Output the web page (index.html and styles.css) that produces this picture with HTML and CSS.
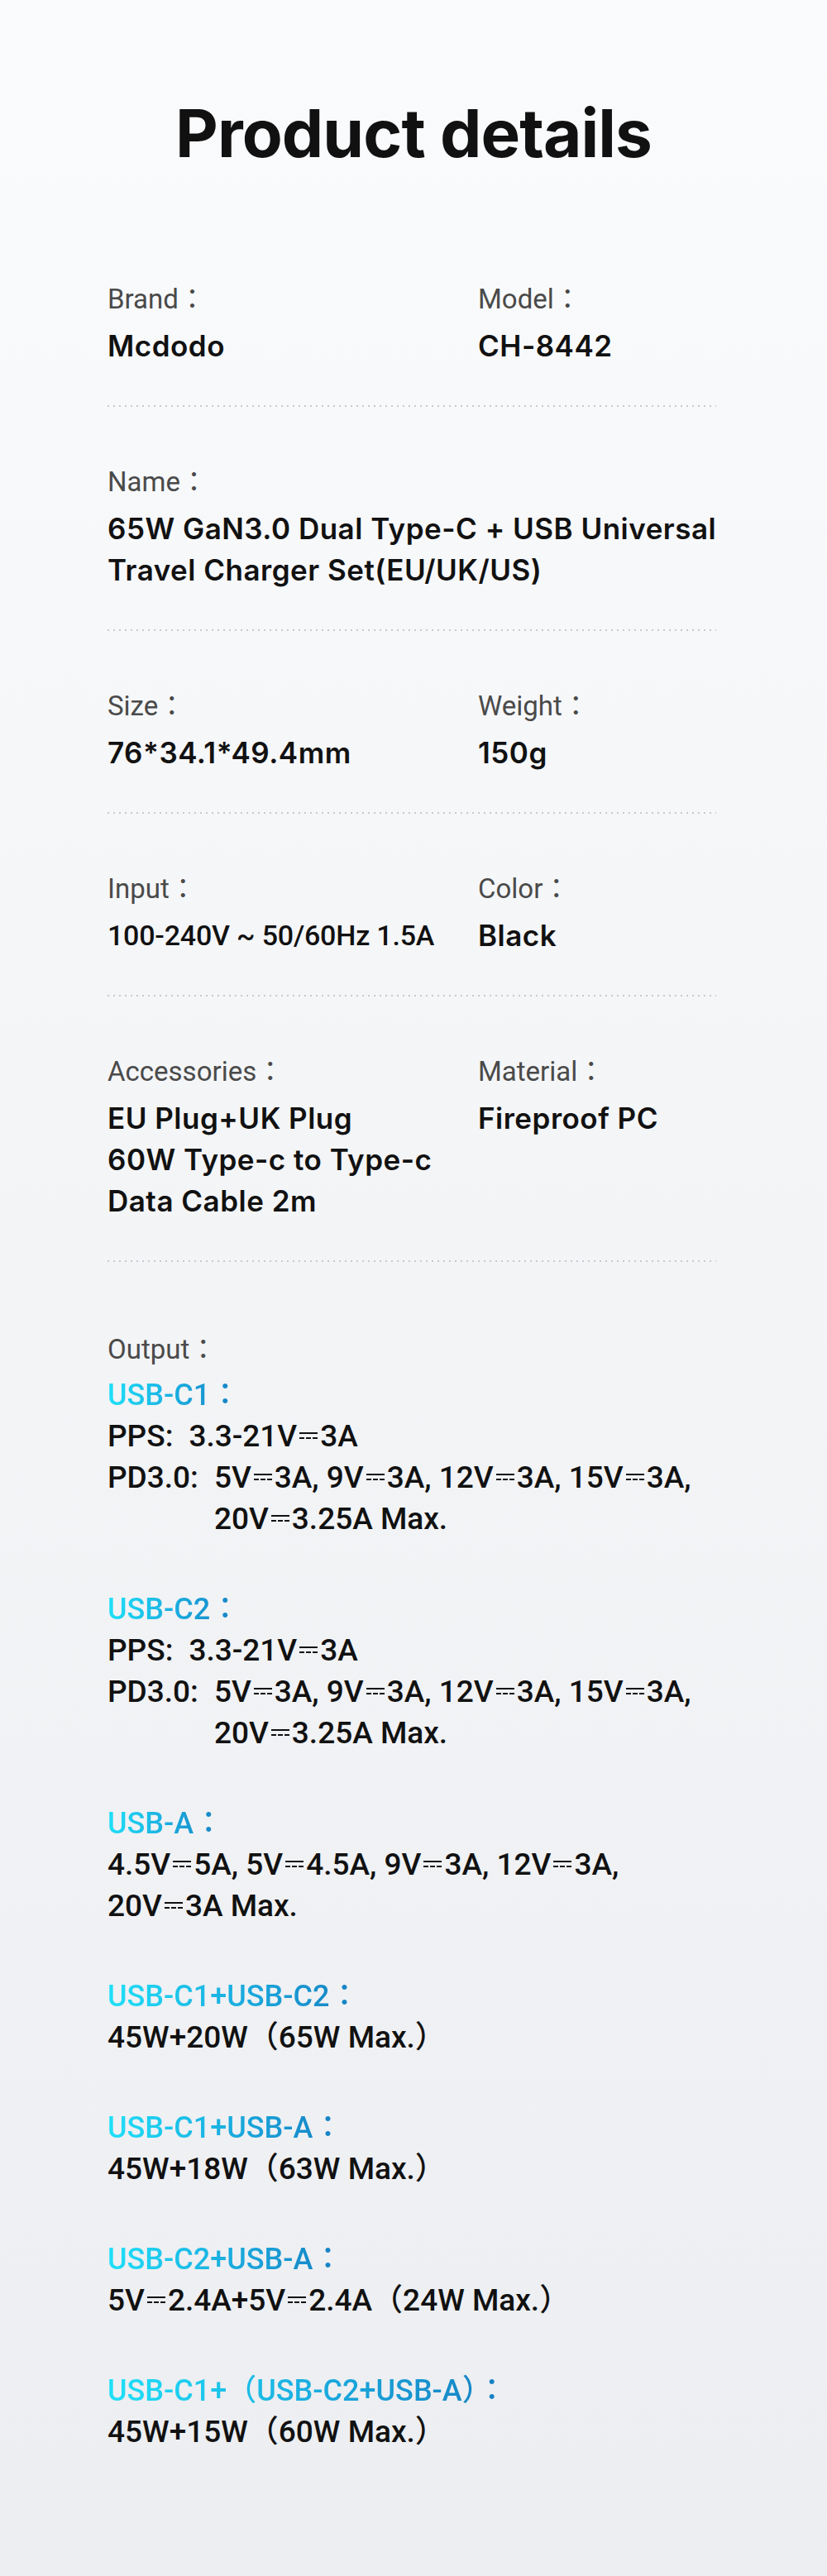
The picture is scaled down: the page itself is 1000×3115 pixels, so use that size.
FILE: index.html
```html
<!DOCTYPE html>
<html lang="en">
<head>
<meta charset="utf-8">
<title>Product details</title>
<link rel="stylesheet" href="styles.css">
</head>
<body>
<div class="page">
  <h1 class="title">Product details</h1>

  <div class="specs">
    <div class="row">
      <div class="cell">
        <div class="label">Brand<span class="colon">：</span></div>
        <div class="value">Mcdodo</div>
      </div>
      <div class="cell">
        <div class="label">Model<span class="colon">：</span></div>
        <div class="value">CH-8442</div>
      </div>
    </div>
    <div class="sep"></div>

    <div class="row">
      <div class="cell wide">
        <div class="label">Name<span class="colon">：</span></div>
        <div class="value">65W GaN3.0 Dual Type-C + USB Universal<br>Travel Charger Set(EU/UK/US)</div>
      </div>
    </div>
    <div class="sep"></div>

    <div class="row">
      <div class="cell">
        <div class="label">Size<span class="colon">：</span></div>
        <div class="value">76*34.1*49.4mm</div>
      </div>
      <div class="cell">
        <div class="label">Weight<span class="colon">：</span></div>
        <div class="value">150g</div>
      </div>
    </div>
    <div class="sep"></div>

    <div class="row">
      <div class="cell">
        <div class="label">Input<span class="colon">：</span></div>
        <div class="value cond">100-240V ~ 50/60Hz 1.5A</div>
      </div>
      <div class="cell">
        <div class="label">Color<span class="colon">：</span></div>
        <div class="value">Black</div>
      </div>
    </div>
    <div class="sep"></div>

    <div class="row">
      <div class="cell">
        <div class="label">Accessories<span class="colon">：</span></div>
        <div class="value">EU Plug+UK Plug<br>60W Type-c to Type-c<br>Data Cable 2m</div>
      </div>
      <div class="cell">
        <div class="label">Material<span class="colon">：</span></div>
        <div class="value">Fireproof PC</div>
      </div>
    </div>
    <div class="sep"></div>
  </div>

  <div class="output">
    <div class="label">Output<span class="colon">：</span></div>

    <div class="group first">
      <div class="head"><span class="grad">USB-C1<span class="colon">：</span></span></div>
      <div class="line kv"><span class="key">PPS:</span><span class="val">3.3-21V<span class="dc"></span>3A</span></div>
      <div class="line kv"><span class="key">PD3.0:</span><span class="val">5V<span class="dc"></span>3A, 9V<span class="dc"></span>3A, 12V<span class="dc"></span>3A, 15V<span class="dc"></span>3A,<br>20V<span class="dc"></span>3.25A Max.</span></div>
    </div>

    <div class="group">
      <div class="head"><span class="grad">USB-C2<span class="colon">：</span></span></div>
      <div class="line kv"><span class="key">PPS:</span><span class="val">3.3-21V<span class="dc"></span>3A</span></div>
      <div class="line kv"><span class="key">PD3.0:</span><span class="val">5V<span class="dc"></span>3A, 9V<span class="dc"></span>3A, 12V<span class="dc"></span>3A, 15V<span class="dc"></span>3A,<br>20V<span class="dc"></span>3.25A Max.</span></div>
    </div>

    <div class="group">
      <div class="head"><span class="grad">USB-A<span class="colon">：</span></span></div>
      <div class="line">4.5V<span class="dc"></span>5A, 5V<span class="dc"></span>4.5A, 9V<span class="dc"></span>3A, 12V<span class="dc"></span>3A,</div>
      <div class="line">20V<span class="dc"></span>3A Max.</div>
    </div>

    <div class="group">
      <div class="head"><span class="grad">USB-C1+USB-C2<span class="colon">：</span></span></div>
      <div class="line">45W+20W（65W Max.）</div>
    </div>

    <div class="group">
      <div class="head"><span class="grad">USB-C1+USB-A<span class="colon">：</span></span></div>
      <div class="line">45W+18W（63W Max.）</div>
    </div>

    <div class="group">
      <div class="head"><span class="grad">USB-C2+USB-A<span class="colon">：</span></span></div>
      <div class="line">5V<span class="dc"></span>2.4A+5V<span class="dc"></span>2.4A（24W Max.）</div>
    </div>

    <div class="group">
      <div class="head"><span class="grad">USB-C1+（USB-C2+USB-A）<span class="colon">：</span></span></div>
      <div class="line">45W+15W（60W Max.）</div>
    </div>
  </div>
</div>
</body>
</html>
```

FILE: styles.css
```css
* {
  box-sizing: border-box;
}

html,
body {
  margin: 0;
  padding: 0;
}

body {
  background: #eceef1;
}

.page {
  width: 1000px;
  min-height: 3115px;
  padding: 113px 130px 0 130px;
  background: linear-gradient(180deg, #fafbfc 0%, #f4f5f7 45%, #eceef1 100%);
}

.title {
  margin: 0;
  font-family: Inter, "Noto Sans", sans-serif;
  font-weight: 700;
  font-size: 80px;
  line-height: 96px;
  letter-spacing: -0.9px;
  text-align: center;
  color: #111111;
}

.specs {
  margin-top: 62px;
}

.row {
  display: grid;
  grid-template-columns: 448px 1fr;
  padding: 71px 0 47px 0;
}

.cell.wide {
  grid-column: 1 / -1;
}

.label {
  font-family: Roboto, "Noto Sans CJK TC", sans-serif;
  font-weight: 400;
  font-size: 33px;
  line-height: 40px;
  color: #4a4a4a;
}

.colon {
  font-family: "Noto Sans CJK TC", "Noto Sans CJK SC", sans-serif;
  line-height: 0;
}

.value {
  margin-top: 11px;
  font-family: Inter, "Noto Sans CJK TC", sans-serif;
  font-weight: 600;
  font-size: 35px;
  line-height: 50px;
  letter-spacing: 0.5px;
  color: #111111;
  white-space: nowrap;
}

.value.cond {
  font-family: Roboto, "Noto Sans CJK TC", sans-serif;
  font-weight: 500;
  font-size: 34px;
  letter-spacing: -0.2px;
}

.sep {
  width: 736px;
  height: 2px;
  background-image: linear-gradient(90deg, #c6cacf 2px, transparent 2px);
  background-size: 7px 2px;
  background-repeat: repeat-x;
}

.output {
  padding-top: 86px;
}

.group {
  margin-top: 59px;
}

.group.first {
  margin-top: 10px;
}

.head {
  font-family: Roboto, "Noto Sans CJK TC", sans-serif;
  font-weight: 500;
  font-size: 36px;
  line-height: 50px;
}

.grad {
  display: inline-block;
  vertical-align: top;
  background: linear-gradient(90deg, #1fe0f8 0%, #1aaee0 50%, #167fc2 100%);
  -webkit-background-clip: text;
  background-clip: text;
  color: transparent;
  -webkit-text-fill-color: transparent;
}

.line {
  font-family: Roboto, "Noto Sans CJK TC", sans-serif;
  font-weight: 500;
  font-size: 37px;
  line-height: 50px;
  color: #111111;
  white-space: nowrap;
}

.line.kv {
  display: flex;
  align-items: flex-start;
}

.key {
  flex: none;
}

.val {
  display: block;
  margin-left: 19px;
}

.dc {
  display: inline-block;
  width: 22px;
  height: 8px;
  margin: 0 3px;
  vertical-align: 9px;
  border-top: 2px solid #111111;
  background-image: linear-gradient(90deg, #111111 6px, transparent 6px);
  background-size: 8px 2px;
  background-position: left bottom;
  background-repeat: repeat-x;
}
```
